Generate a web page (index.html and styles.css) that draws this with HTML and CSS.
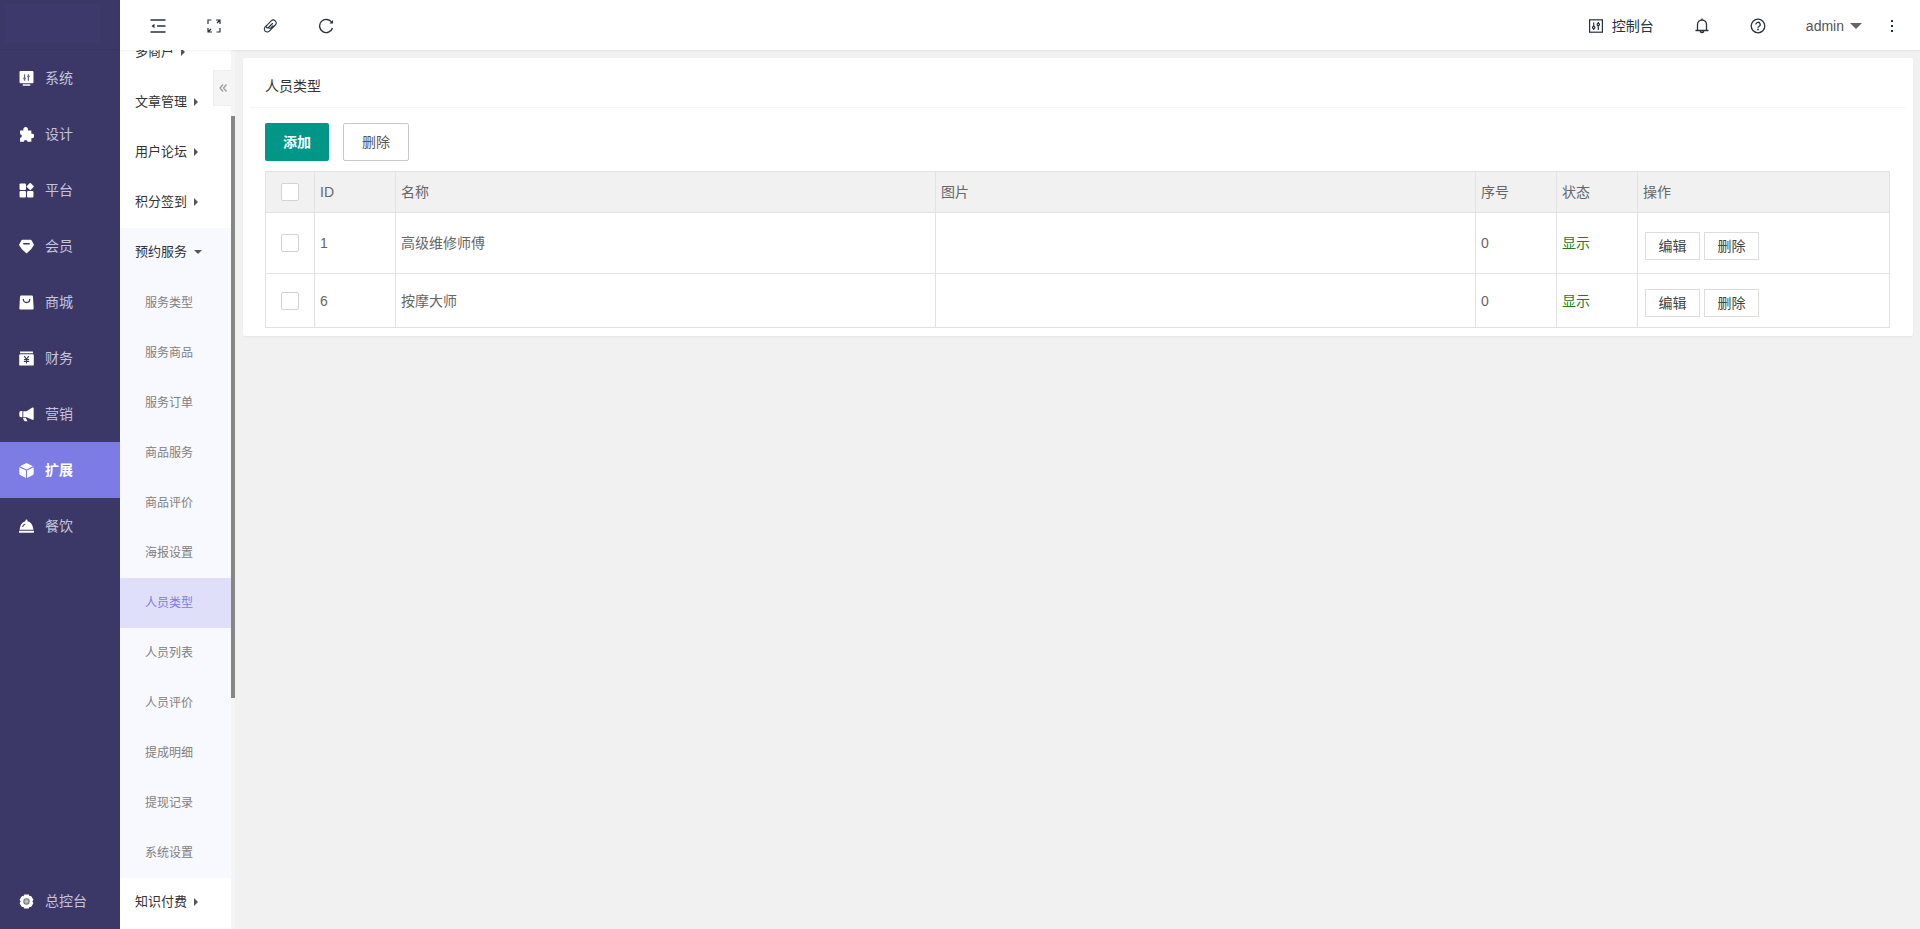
FILE: index.html
```html
<!DOCTYPE html>
<html lang="zh-CN">
<head>
  <meta charset="UTF-8">
  <meta name="viewport" content="width=device-width, initial-scale=1.0">
  <title>人员类型</title>
  <link rel="stylesheet" href="styles.css">
</head>
<body>

  <aside class="side">
    <div class="logo"></div>
    <nav class="side-nav">
      <a href="#" class="side-link">
        <svg class="side-icon" viewBox="0 0 14 14"><path fill="currentColor" fill-rule="evenodd" d="M1.5 0h11a1 1 0 0 1 1 1v9.500a1 1 0 0 1-1 1h-11a1 1 0 0 1-1-1v-9.500a1 1 0 0 1 1-1zM3.500 12.300h7v1.500h-7z"/><path d="M5.200 3v6M8.800 3v6M4 7h2.400M7.600 5h2.400" stroke="#6a6890" stroke-width="1.200"/></svg>
        系统
      </a>
      <a href="#" class="side-link">
        <svg class="side-icon" viewBox="0 0 14 14"><path fill="currentColor" d="M1 3.200h3.200a2.200 2.200 0 1 1 4 0h3.300v3.100a2.100 2.100 0 1 1 0 4v3.500h-3.600a1.700 1.700 0 0 0-3.400 0h-3.500v-3.600a1.700 1.700 0 0 0 0-3.400z"/></svg>
        设计
      </a>
      <a href="#" class="side-link">
        <svg class="side-icon" viewBox="0 0 14 14"><g fill="currentColor"><rect x=".5" y=".5" width="6" height="6" rx="1"/><rect x=".5" y="7.500" width="6" height="6" rx="1"/><rect x="7.500" y="7.500" width="6" height="6" rx="1"/><path d="M10.500 0l3.300 3.300-3.300 3.300-3.300-3.300z" stroke="currentColor" stroke-width=".6" stroke-linejoin="round"/></g></svg>
        平台
      </a>
      <a href="#" class="side-link">
        <svg class="side-icon" viewBox="0 0 14 14"><path fill="currentColor" stroke="currentColor" stroke-width="1.500" stroke-linejoin="round" d="M3 1.500h8l2.200 4-2.200 3.300-4 3.700-4-3.700-2.200-3.300z"/><path d="M4.500 4.500h5" stroke="#3b3868" stroke-width="1.400" stroke-linecap="round"/></svg>
        会员
      </a>
      <a href="#" class="side-link">
        <svg class="side-icon" viewBox="0 0 14 14"><path fill="currentColor" d="M2 .5h10a1 1 0 0 1 1 1l.7 11a1 1 0 0 1-1 1h-11.400a1 1 0 0 1-1-1l.7-11a1 1 0 0 1 1-1z"/><path d="M4 4a3 3 0 0 0 6 0" fill="none" stroke="#3b3868" stroke-width="1.200" stroke-linecap="round"/></svg>
        商城
      </a>
      <a href="#" class="side-link">
        <svg class="side-icon" viewBox="0 0 14 14"><path fill="currentColor" d="M1 .5h12v1.500h-12zM1 3h12a.8.8 0 0 1 .8.8v9a.8.8 0 0 1-.8.8h-12a.8.8 0 0 1-.8-.8v-9a.8.8 0 0 1 .8-.8z"/><path d="M4.800 4.800l2.200 2.700 2.200-2.700M7 7.500v4.200M4.600 8h4.800M4.600 9.700h4.800" fill="none" stroke="#3b3868"/></svg>
        财务
      </a>
      <a href="#" class="side-link">
        <svg class="side-icon" viewBox="0 0 14 14"><path fill="currentColor" d="M12.500.5q1.200-.5 1.200 1v9.500q0 1.400-1.200.9l-5.500-2.400h-3v-5.500h3zM3.200 3.800v5.700h-1.400a1.500 1.500 0 0 1-1.500-1.500v-2.700a1.500 1.500 0 0 1 1.500-1.500zM3.800 10.200h2.600l1.600 3h-2.600q-1 0-1.600-3z"/></svg>
        营销
      </a>
      <a href="#" class="side-link active">
        <svg class="side-icon" viewBox="0 0 14 14"><path fill="currentColor" d="M7 0l6 3-6 3-6-3zM.3 4l6.200 3v7l-5.400-2.700q-.8-.4-.8-1.300zM13.700 4l-6.200 3v7l5.400-2.700q.8-.4.8-1.300z"/></svg>
        扩展
      </a>
      <a href="#" class="side-link">
        <svg class="side-icon" viewBox="0 0 14 14"><path fill="currentColor" d="M6 2v-.5a1 1 0 0 1 2 0v.5q4.800 1 5.500 8h-13q.7-7 5.500-8zM0 11h14v1.800h-14z"/><path d="M3.500 7a3.600 3.600 0 0 1 2-2" fill="none" stroke="#3b3868" stroke-linecap="round"/></svg>
        餐饮
      </a>
      <a href="#" class="side-link side-bottom">
        <svg class="side-icon" viewBox="0 0 14 14"><path fill="currentColor" stroke="currentColor" stroke-linejoin="round" d="M5.200 1h3.600l.6 1.500 1.600-.2 1.900 3-1 1.700 1 1.700-1.900 3-1.600-.2-.6 1.500h-3.600l-.6-1.500-1.600.2-1.900-3 1-1.700-1-1.700 1.900-3 1.600.2z"/><circle cx="7" cy="7" r="2.500" fill="#bbb" stroke="#777"/></svg>
        总控台
      </a>
    </nav>
  </aside>

  <div class="page">
    <header class="top">
      <div class="top-left">
        <button class="icon-btn" aria-label="收起菜单"><svg width="16" height="14" viewBox="0 0 16 14"><path d="M.5 1h15M7 7h8.500M.5 13h15" stroke="currentColor" stroke-width="1.500"/><path d="M4.500 4.800v4.400l-3-2.200z" fill="currentColor"/></svg></button>
        <button class="icon-btn" aria-label="全屏"><svg width="14" height="14" viewBox="0 0 14 14"><path d="M1 5v-4h3.500M9 1h4v4M13 9v4h-3.500M5 13h-4v-4M10 4l3-3M4 10l-3 3" fill="none" stroke="currentColor" stroke-width="1.200"/></svg></button>
        <button class="icon-btn" aria-label="链接"><svg width="14" height="14" viewBox="0 0 14 14"><path d="M9.500 4.500l-4 4a1.300 1.300 0 0 1-1.900-1.900l4.600-4.700a2.900 2.900 0 0 1 4.100 4.100l-6 6.100a2.900 2.900 0 0 1-4.900-1.500q-.3-1.500.8-2.700l1-1M5.500 8.500a1.500 1.500 0 0 0 2.300.3l2-2" fill="none" stroke="currentColor" stroke-width="1.100" stroke-linecap="round"/></svg></button>
        <button class="icon-btn" aria-label="刷新"><svg width="16" height="16" viewBox="0 0 16 16"><path d="M14.500 10a6.600 6.600 0 1 1-.7-5.500" fill="none" stroke="currentColor" stroke-width="1.400"/><path d="M15 2v3.500h-3.500z" fill="currentColor"/></svg></button>
      </div>
      <div class="top-right">
        <a href="#" class="console">
          <svg width="14" height="14" viewBox="0 0 14 14"><g fill="none" stroke="currentColor" stroke-width="1.200"><rect x=".6" y=".8" width="12.800" height="12.400"/><path d="M4.700 3.500v4M4.700 9.500v1.500M9.300 3v1.500M9.300 6.500v4.500"/><circle cx="4.700" cy="8.500" r="1.200"/><circle cx="9.300" cy="5.500" r="1.200"/></g></svg>
          控制台
        </a>
        <button class="icon-btn" aria-label="通知"><svg width="14" height="16" viewBox="0 0 14 16"><path d="M2.500 12.500v-6a4.500 4.500 0 0 1 9 0v6M.5 12.500h13M7 .5v1.500M5 13.500q2 2 4 0" fill="none" stroke="currentColor" stroke-width="1.300"/></svg></button>
        <button class="icon-btn" aria-label="帮助"><svg width="16" height="16" viewBox="0 0 16 16"><g fill="none" stroke="currentColor" stroke-width="1.300"><circle cx="8" cy="8" r="6.800"/><path d="M5.800 6.500a2.200 2.200 0 1 1 3 2q-.8.4-.8 1.300"/></g><circle cx="8" cy="11.500" r=".9" fill="currentColor"/></svg></button>
        <button class="user">admin <span class="user-caret"></span></button>
        <button class="more" aria-label="更多"><svg width="4" height="14" viewBox="0 0 4 14"><path d="M1 1h2v2h-2zM1 6h2v2h-2zM1 11h2v2h-2z" fill="currentColor"/></svg></button>
      </div>
    </header>

    <div class="body">
      <aside class="sub">
        <nav class="sub-nav">
          <a href="#" class="group">多商户<span class="caret"></span></a>
          <a href="#" class="group">文章管理<span class="caret"></span></a>
          <a href="#" class="group">用户论坛<span class="caret"></span></a>
          <a href="#" class="group">积分签到<span class="caret"></span></a>
          <div class="open">
            <a href="#" class="group">预约服务<span class="caret down"></span></a>
            <a href="#" class="item">服务类型</a>
            <a href="#" class="item">服务商品</a>
            <a href="#" class="item">服务订单</a>
            <a href="#" class="item">商品服务</a>
            <a href="#" class="item">商品评价</a>
            <a href="#" class="item">海报设置</a>
            <a href="#" class="item current">人员类型</a>
            <a href="#" class="item">人员列表</a>
            <a href="#" class="item">人员评价</a>
            <a href="#" class="item">提成明细</a>
            <a href="#" class="item">提现记录</a>
            <a href="#" class="item">系统设置</a>
          </div>
          <a href="#" class="group">知识付费<span class="caret"></span></a>
        </nav>
        <div class="track"><div class="thumb"></div></div>
        <button class="fold" aria-label="折叠"><svg width="8" height="8" viewBox="0 0 8 8"><path d="M4 .5l-3 3.500 3 3.500M7.500.5l-3 3.500 3 3.500" fill="none" stroke="currentColor" stroke-width="1.200"/></svg></button>
      </aside>

      <main class="main">
        <section class="card">
          <h1 class="card-title">人员类型</h1>
          <div class="card-body">
            <div class="tools">
              <button class="btn btn-add">添加</button>
              <button class="btn btn-plain">删除</button>
            </div>
            <table class="list">
              <colgroup>
                <col class="col-check">
                <col class="col-small">
                <col>
                <col>
                <col class="col-small">
                <col class="col-small">
                <col class="col-ops">
              </colgroup>
              <thead>
                <tr>
                  <th class="check"><input type="checkbox" aria-label="全选"></th>
                  <th>ID</th>
                  <th>名称</th>
                  <th>图片</th>
                  <th>序号</th>
                  <th>状态</th>
                  <th>操作</th>
                </tr>
              </thead>
              <tbody>
                <tr class="tall">
                  <td class="check"><input type="checkbox" aria-label="选择 1"></td>
                  <td>1</td>
                  <td>高级维修师傅</td>
                  <td></td>
                  <td>0</td>
                  <td class="shown">显示</td>
                  <td><div class="ops"><button class="btn-sm">编辑</button><button class="btn-sm">删除</button></div></td>
                </tr>
                <tr>
                  <td class="check"><input type="checkbox" aria-label="选择 6"></td>
                  <td>6</td>
                  <td>按摩大师</td>
                  <td></td>
                  <td>0</td>
                  <td class="shown">显示</td>
                  <td><div class="ops"><button class="btn-sm">编辑</button><button class="btn-sm">删除</button></div></td>
                </tr>
              </tbody>
            </table>
          </div>
        </section>
      </main>
    </div>
  </div>

</body>
</html>
```

FILE: styles.css
```css
* {
  box-sizing: border-box;
}

body {
  display: flex;
  height: 100vh;
  margin: 0;
  overflow: hidden;
  font: 14px/24px "Liberation Sans", "Noto Sans CJK SC", sans-serif;
  color: #666;
  background: #f1f1f1;
}

a {
  color: inherit;
  text-decoration: none;
}

button {
  padding: 0;
  border: 0;
  background: none;
  color: inherit;
  font: inherit;
  cursor: pointer;
}

svg {
  display: block;
}

/* main menu */
.side {
  display: flex;
  flex-direction: column;
  flex: 0 0 120px;
  background: #3b3868;
}

.logo {
  height: 50px;
  padding: 4px 20px 6px 5px;
  border-bottom: 1px solid #373463;
}

.logo::before {
  content: "";
  display: block;
  height: 100%;
  background: #3d3a6b;
}

.side-nav {
  display: flex;
  flex-direction: column;
  flex: 1;
}

.side-link {
  display: flex;
  align-items: center;
  gap: 11px;
  height: 56px;
  padding-left: 19px;
  color: #c5c4dc;
}

.side-icon {
  width: 15px;
  height: 15px;
  color: #fff;
}

.side-link.active {
  background: #7d7be4;
  color: #fff;
  font-weight: bold;
}

.side-bottom {
  margin-top: auto;
}

/* top bar */
.page {
  display: flex;
  flex-direction: column;
  flex: 1;
  min-width: 0;
}

.top {
  position: relative;
  z-index: 2;
  display: flex;
  justify-content: space-between;
  flex: 0 0 50px;
  padding: 0 18px 0 10px;
  background: #fff;
  box-shadow: 0 1px 2px rgba(0, 0, 0, 0.06);
  color: #28323e;
}

.top-left,
.top-right {
  display: flex;
  align-items: center;
  padding-top: 2px;
}

.icon-btn {
  display: flex;
  align-items: center;
  justify-content: center;
  width: 56px;
  height: 40px;
}

.console {
  display: flex;
  align-items: center;
  gap: 9px;
  padding-right: 20px;
}

.user {
  display: flex;
  align-items: center;
  gap: 6px;
  padding: 0 20px;
  color: #555;
}

.user-caret {
  border: 6px solid transparent;
  border-top-color: #666;
  border-bottom: 0;
}

.more {
  width: 20px;
}

.more svg {
  margin: 0 auto;
}

/* second menu */
.body {
  display: flex;
  flex: 1;
  min-height: 0;
}

.sub {
  position: relative;
  display: flex;
  flex: 0 0 115px;
  overflow: hidden;
}

.sub-nav {
  flex: 1;
  margin-top: -22px;
  background: #fff;
}

.group,
.item {
  display: flex;
  align-items: center;
  height: 50px;
}

.group {
  gap: 7px;
  padding: 0 0 2px 15px;
  color: #333;
  font-size: 13px;
}

.item {
  padding-left: 25px;
  color: #808080;
  font-size: 12px;
}

.open {
  background: #f8f8ff;
}

.item.current {
  background: #dfdff9;
  color: #7d7be4;
}

.caret {
  border: 4px solid transparent;
  border-left-color: #555;
  border-right: 0;
}

.caret.down {
  border: 4px solid transparent;
  border-top-color: #555;
  border-bottom: 0;
}

.track {
  width: 4px;
  padding-top: 66px;
  background: #f5f5f5;
}

.thumb {
  height: 582px;
  background: #868686;
}

.fold {
  position: absolute;
  top: 20px;
  right: 4px;
  display: flex;
  align-items: center;
  justify-content: center;
  width: 18px;
  height: 36px;
  border: 1px solid #eee;
  border-right: 0;
  background: #f5f5f5;
  color: #999;
}

/* content */
.main {
  flex: 1;
  min-width: 0;
  padding: 8px 7px 0 8px;
}

.card {
  border-radius: 2px;
  background: #fff;
  box-shadow: 0 1px 2px rgba(0, 0, 0, 0.05);
}

.card-title {
  height: 50px;
  margin: 0 7px;
  padding: 7px 15px 0;
  border-bottom: 1px solid #f6f6f6;
  color: #333;
  font-size: 14px;
  font-weight: normal;
  line-height: 42px;
}

.card-body {
  padding: 15px 23px 8px 22px;
}

.tools {
  display: flex;
  gap: 14px;
  margin-bottom: 10px;
}

.btn {
  height: 38px;
  padding: 0 18px;
  border-radius: 2px;
}

.btn-add {
  background: #009688;
  color: #fff;
  font-weight: bold;
}

.btn-plain {
  border: 1px solid #c9c9c9;
  color: #555;
}

.list {
  width: 100%;
  table-layout: fixed;
  border-collapse: collapse;
}

.col-check {
  width: 49px;
}

.col-small {
  width: 81px;
}

.col-ops {
  width: 252px;
}

.list th,
.list td {
  height: 54px;
  padding: 0 5px;
  border: 1px solid #e2e2e2;
  font-weight: normal;
  text-align: left;
}

.list th {
  height: 41px;
  background: #f1f1f1;
}

.list .tall td {
  height: 61px;
}

.list .check {
  text-align: center;
}

.check input {
  display: block;
  width: 18px;
  height: 18px;
  margin: 0 auto;
  border: 1px solid #d2d2d2;
  border-radius: 2px;
  background: #fff;
  appearance: none;
}

.check input:checked {
  background: #009688;
}

.list .shown {
  color: #1a801a;
}

.ops {
  display: flex;
  gap: 4px;
  padding: 5px 2px 0;
}

.btn-sm {
  width: 55px;
  height: 28px;
  border: 1px solid #ddd;
  color: #444;
}
```
